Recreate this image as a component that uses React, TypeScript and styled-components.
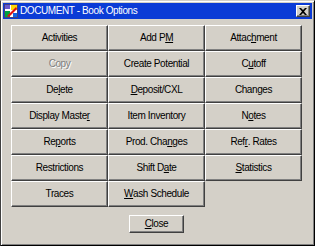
import React from 'react';
import styled, { createGlobalStyle } from 'styled-components';

// reset da página
const Global = createGlobalStyle`
  * { box-sizing: border-box; }
  html, body { margin: 0; padding: 0; background: #d4d0c8; }
  body { font-family: "Liberation Sans", Arial, sans-serif; }
`;

// moldura da janela
const Window = styled.div`
  width: 315px;
  height: 246px;
  background: #d4d0c8;
  border: 1px solid;
  border-color: #d4d0c8 #000 #000 #404040;
  box-shadow: inset 1px 1px #fff, inset -1px -1px #808080;
  padding: 2px;
  display: flex;
  flex-direction: column;
`;

const TitleBar = styled.div`
  height: 16px;
  background: #0b3bd6;
  display: flex;
  align-items: center;
  padding: 0 2px 0 1px;
  gap: 2px;
`;

const Title = styled.span`
  flex: 1;
  color: #fff;
  font-size: 10px;
  letter-spacing: -0.4px;
  line-height: 16px;
  white-space: nowrap;
`;

const CloseBox = styled.div`
  width: 14px;
  height: 12px;
  background: #d4d0c8;
  border: 1px solid;
  border-color: #fff #404040 #404040 #fff;
  box-shadow: inset -1px -1px #808080;
  display: flex;
  align-items: center;
  justify-content: center;
`;

const Body = styled.div`
  padding: 6px 0 0 8px;
  display: flex;
  flex-direction: column;
  width: 299px;
`;

const Grid = styled.div`
  display: grid;
  grid-template-columns: repeat(3, 97px);
  grid-auto-rows: 26px;
`;

// botão no estilo clássico do windows
const Button = styled.div<{ $disabled?: boolean }>`
  background: #d4d0c8;
  border: 1px solid;
  border-color: #fff #404040 #404040 #fff;
  box-shadow: inset -1px -1px #808080;
  display: flex;
  align-items: center;
  justify-content: center;
  font-size: 10px;
  letter-spacing: -0.4px;
  color: ${p => (p.$disabled ? '#808080' : '#000')};
  text-shadow: ${p => (p.$disabled ? '1px 1px #fff' : 'none')};
  white-space: nowrap;
  padding-bottom: 1px;
`;

const Footer = styled.div`
  display: flex;
  justify-content: center;
  padding-top: 8px;
  width: 291px;
`;

const CloseButton = styled(Button)`
  width: 55px;
  height: 18px;
`;

const Key = styled.span`
  text-decoration: underline;
  text-underline-offset: 1px;
`;

const DocIcon = () => (
  <svg width="14" height="14" viewBox="0 0 14 14">
    <rect x="0.5" y="0.5" width="13" height="13" fill="#fff" stroke="#404080" />
    <rect x="1" y="1" width="5" height="4" fill="#6a5acd" />
    <rect x="7" y="1" width="6" height="5" fill="#ffd800" />
    <rect x="1" y="7" width="5" height="6" fill="#00a040" />
    <path d="M3 12 L12 3 L13 5 L5 13 Z" fill="#e01010" />
    <rect x="9" y="9" width="4" height="4" fill="#1060e0" />
  </svg>
);

type Item = { label: React.ReactNode; disabled?: boolean };

const u = (before: string, key: string, after: string) => (
  <>
    {before}
    <Key>{key}</Key>
    {after}
  </>
);

const items: Item[] = [
  { label: 'Activities' },
  { label: u('Add P', 'M', '') },
  { label: u('Attac', 'h', 'ment') },
  { label: 'Copy', disabled: true },
  { label: 'Create Potential' },
  { label: u('C', 'u', 'toff') },
  { label: u('De', 'l', 'ete') },
  { label: u('', 'D', 'eposit/CXL') },
  { label: 'Changes' },
  { label: u('Display Maste', 'r', '') },
  { label: 'Item Inventory' },
  { label: u('N', 'o', 'tes') },
  { label: u('Re', 'p', 'orts') },
  { label: u('Prod. Cha', 'n', 'ges') },
  { label: u('Ref', 'r', '. Rates') },
  { label: 'Restrictions' },
  { label: u('Shift D', 'a', 'te') },
  { label: u('', 'S', 'tatistics') },
  { label: 'Traces' },
  { label: u('', 'W', 'ash Schedule') },
];

const App: React.FC = () => {
  return (
    <Window>
      <Global />
      <TitleBar>
        <DocIcon />
        <Title>DOCUMENT - Book Options</Title>
        <CloseBox>
          <svg width="8" height="7" viewBox="0 0 8 7">
            <path d="M0 0 L2 0 L4 2 L6 0 L8 0 L5 3.5 L8 7 L6 7 L4 5 L2 7 L0 7 L3 3.5 Z" fill="#000" />
          </svg>
        </CloseBox>
      </TitleBar>
      <Body>
        <Grid>
          {items.map((it, i) => (
            <Button key={i} $disabled={it.disabled}>
              {it.label}
            </Button>
          ))}
        </Grid>
        <Footer>
          <CloseButton>{u('', 'C', 'lose')}</CloseButton>
        </Footer>
      </Body>
    </Window>
  );
};

export default App;
